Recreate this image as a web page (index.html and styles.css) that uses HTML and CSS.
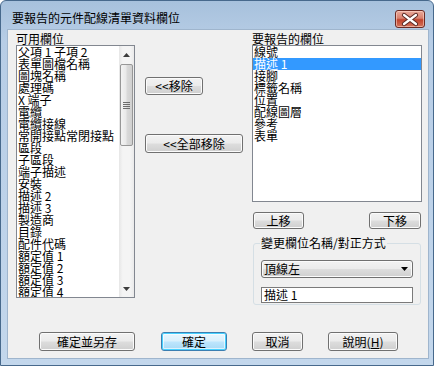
FILE: index.html
```html
<!DOCTYPE html>
<html>
<head>
<meta charset="utf-8">
<title>要報告的元件配線清單資料欄位</title>
<link rel="stylesheet" href="styles.css">
</head>
<body>
<div class="window">
  <div class="titlebar">
    <span class="title">要報告的元件配線清單資料欄位</span>
    <div class="close">
      <svg width="28" height="15" viewBox="0 0 28 15">
        <path d="M8 3 L20 12 M20 3 L8 12" stroke="#5a2a26" stroke-width="4.2" stroke-linecap="round" fill="none"/>
        <path d="M8 3 L20 12 M20 3 L8 12" stroke="#ffffff" stroke-width="2.2" stroke-linecap="round" fill="none"/>
      </svg>
    </div>
  </div>
  <div class="client">
    <div class="main">
      <div class="col-left">
        <div class="label">可用欄位</div>
        <div class="listbox left-list">
          <ul class="items">
            <li>父項 1 子項 2</li>
            <li>表單圖檔名稱</li>
            <li>圖塊名稱</li>
            <li>處理碼</li>
            <li>X 端子</li>
            <li>電纜</li>
            <li>電纜接線</li>
            <li>常開接點常閉接點</li>
            <li>區段</li>
            <li>子區段</li>
            <li>端子描述</li>
            <li>安裝</li>
            <li>描述 2</li>
            <li>描述 3</li>
            <li>製造商</li>
            <li>目錄</li>
            <li>配件代碼</li>
            <li>額定值 1</li>
            <li>額定值 2</li>
            <li>額定值 3</li>
            <li>額定值 4</li>
          </ul>
          <div class="vscroll">
            <div class="sb-btn">
              <svg width="7" height="4" viewBox="0 0 7 4"><path d="M0 4 L3.5 0 L7 4 Z" fill="#3c3c3c"/></svg>
            </div>
            <div class="sb-track">
              <div class="sb-thumb">
                <svg width="7" height="7" viewBox="0 0 7 7">
                  <path d="M0 0.5 H7 M0 2.5 H7 M0 4.5 H7 M0 6.5 H7" stroke="#6d6d6d" stroke-width="1"/>
                </svg>
              </div>
            </div>
            <div class="sb-btn">
              <svg width="7" height="4" viewBox="0 0 7 4"><path d="M0 0 L3.5 4 L7 0 Z" fill="#3c3c3c"/></svg>
            </div>
          </div>
        </div>
      </div>
      <div class="col-mid">
        <button class="btn btn-remove">&lt;&lt;移除</button>
        <button class="btn btn-remove-all">&lt;&lt;全部移除</button>
      </div>
      <div class="col-right">
        <div class="label">要報告的欄位</div>
        <div class="listbox right-list">
          <ul class="items">
            <li>線號</li>
            <li class="selected">描述 1</li>
            <li>接腳</li>
            <li>標籤名稱</li>
            <li>位置</li>
            <li>配線圖層</li>
            <li>參考</li>
            <li>表單</li>
          </ul>
        </div>
        <div class="move-row">
          <button class="btn btn-up">上移</button>
          <button class="btn btn-down">下移</button>
        </div>
        <div class="group">
          <div class="group-label">變更欄位名稱/對正方式</div>
          <div class="combo">
            <span>頂線左</span>
            <svg width="7" height="4" viewBox="0 0 7 4"><path d="M0 0 L3.5 4 L7 0 Z" fill="#000"/></svg>
          </div>
          <div class="textbox">描述 1</div>
        </div>
      </div>
    </div>
    <div class="footer">
      <button class="btn btn-save">確定並另存</button>
      <button class="btn btn-default btn-ok">確定</button>
      <button class="btn btn-cancel">取消</button>
      <button class="btn btn-help">說明(<u>H</u>)</button>
    </div>
  </div>
</div>
</body>
</html>
```
FILE: styles.css
```css
* {
  box-sizing: border-box;
}

html, body {
  margin: 0;
  padding: 0;
}

body {
  width: 436px;
  height: 366px;
  overflow: hidden;
  background: #ffffff;
  font-family: "Noto Sans CJK TC", "Noto Sans", sans-serif;
  font-size: 12px;
  color: #000;
}

.window {
  width: 434px;
  height: 366px;
  border: 1px solid #47698c;
  border-radius: 6px 6px 0 0;
  background: linear-gradient(180deg, #a7c1dc 0%, #b7cde6 40px, #c3d7ec 100%);
  padding: 0 5px 7px 7px;
  display: flex;
  flex-direction: column;
}

.titlebar {
  height: 29px;
  display: flex;
  align-items: flex-start;
}

.title {
  padding: 10px 0 0 4px;
  line-height: 14px;
  font-size: 12px;
  white-space: nowrap;
  color: #000;
}

.close {
  margin: 9px 3px 0 auto;
  width: 30px;
  height: 18px;
  border: 1px solid #6b2a24;
  border-radius: 3px;
  background: linear-gradient(180deg, #e9a99b 0%, #d8806e 45%, #c1432d 55%, #d2735c 100%);
  box-shadow: inset 0 0 0 1px rgba(255, 220, 210, 0.55);
  display: flex;
  align-items: center;
  justify-content: center;
}

.client {
  height: 328px;
  background: #f0f0f0;
  box-shadow: 0 0 0 1px #9fb5cd;
  display: flex;
  flex-direction: column;
}

.main {
  height: 268px;
  display: flex;
  padding: 2px 0 0 8px;
}

.label {
  height: 13px;
  line-height: 13px;
  white-space: nowrap;
}

.col-left {
  width: 119px;
}

.listbox {
  border: 1px solid #828790;
  background: #fff;
}

.left-list {
  height: 253px;
  display: flex;
}

.items {
  list-style: none;
  margin: 0;
  padding: 0 0 0 1px;
  flex: 1;
  line-height: 12px;
  overflow: hidden;
  white-space: nowrap;
}

.items li {
  height: 12px;
}

.vscroll {
  width: 15px;
  display: flex;
  flex-direction: column;
  background: linear-gradient(90deg, #e6e6e6 0%, #f4f4f4 25%, #f4f4f4 75%, #eaeaea 100%);
}

.sb-btn {
  height: 17px;
  display: flex;
  align-items: center;
  justify-content: center;
}

.sb-track {
  flex: 1;
  padding: 1px 1px 0 1px;
}

.sb-thumb {
  height: 82px;
  border: 1px solid #979797;
  border-radius: 2px;
  background: linear-gradient(90deg, #f3f3f3 0%, #e9e9e9 45%, #d9d9d9 55%, #d0d0d0 100%);
  display: flex;
  align-items: center;
  justify-content: center;
}

.col-mid {
  width: 98px;
  margin-left: 10px;
  padding-top: 45px;
  display: flex;
  flex-direction: column;
  align-items: flex-start;
}

.btn {
  font-family: "Noto Sans CJK TC", "Noto Sans", sans-serif;
  font-size: 12px;
  color: #000;
  padding: 0;
  line-height: 14px;
  border: 1px solid #707070;
  border-radius: 3px;
  background: linear-gradient(180deg, #f2f2f2 0%, #ebebeb 48%, #dddddd 52%, #cfcfcf 100%);
  box-shadow: inset 0 0 0 1px #fbfbfb;
  display: flex;
  align-items: center;
  justify-content: center;
  white-space: nowrap;
}

.btn u {
  text-decoration: underline;
}

.btn-remove {
  width: 58px;
  height: 18px;
}

.btn-remove-all {
  width: 98px;
  height: 19px;
  margin-top: 39px;
}

.col-right {
  width: 170px;
  margin-left: 9px;
}

.right-list {
  height: 157px;
}

.right-list .items {
  padding-left: 0;
}

.right-list .items li {
  padding-left: 1px;
}

.items li.selected {
  background: #3399ff;
  color: #fff;
}

.move-row {
  display: flex;
  justify-content: space-between;
  margin: 10px 1px 0 1px;
}

.btn-up {
  width: 51px;
  height: 17px;
}

.btn-down {
  width: 52px;
  height: 17px;
}

.group {
  margin: 14px 1px 0 1px;
  border: 1px solid #d5dfe5;
  border-radius: 3px;
  padding: 0 7px 1px 7px;
}

.group-label {
  width: fit-content;
  margin: -8px 0 0 -1px;
  padding: 0 1px;
  height: 13px;
  line-height: 13px;
  background: #f0f0f0;
  white-space: nowrap;
}

.combo {
  margin-top: 11px;
  height: 18px;
  border: 1px solid #707070;
  border-radius: 3px;
  background: linear-gradient(180deg, #f2f2f2 0%, #ebebeb 48%, #dddddd 52%, #cfcfcf 100%);
  box-shadow: inset 0 0 0 1px #fbfbfb;
  display: flex;
  align-items: center;
  justify-content: space-between;
  padding: 0 4px 0 2px;
  line-height: 14px;
}

.textbox {
  margin-top: 9px;
  height: 16px;
  border: 1px solid #7a7a7a;
  background: #fff;
  padding-left: 2px;
  line-height: 14px;
}

.footer {
  display: flex;
  padding: 34px 0 0 31px;
}

.footer .btn {
  height: 19px;
}

.btn-save {
  width: 96px;
}

.btn-ok {
  width: 66px;
  margin-left: 26px;
}

.btn-cancel {
  width: 51px;
  margin-left: 25px;
}

.btn-help {
  width: 70px;
  margin-left: 25px;
}

.btn-default {
  border-color: #3c7fb1;
  background: linear-gradient(180deg, #eaf6fd 0%, #d9f0fc 48%, #bee6fd 52%, #a7d9f5 100%);
  box-shadow: inset 0 0 0 1px #48d1ff, inset 0 0 0 2px rgba(255, 255, 255, 0.6);
}
```
